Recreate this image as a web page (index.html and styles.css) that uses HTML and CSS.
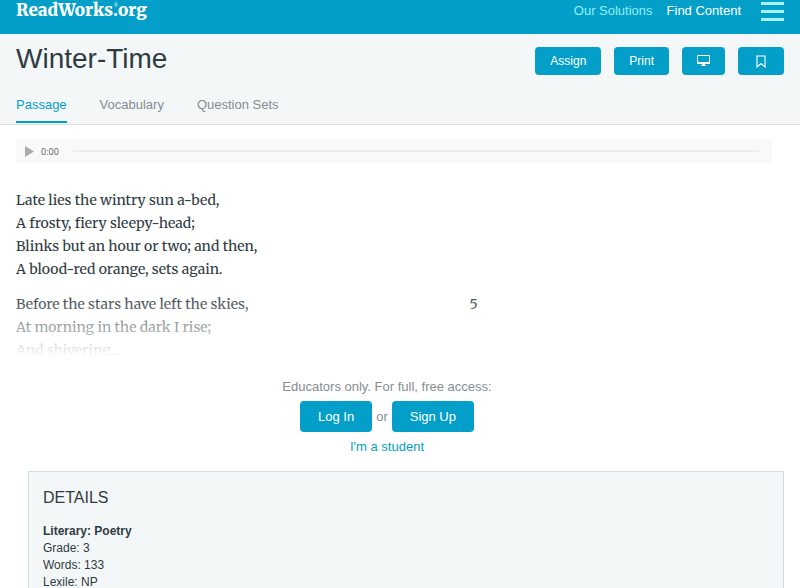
FILE: index.html
```html
<!DOCTYPE html>
<html lang="en">
  <head>
    <meta charset="UTF-8" />
    <meta name="viewport" content="width=device-width, initial-scale=1.0" />
    <title>Winter-Time</title>
    <link rel="stylesheet" href="styles.css">
  </head>
  <body>
    <header class="topbar">
      <a class="logo" href="#">ReadWorks<span class="dot">.<sup>®</sup></span>org</a>
      <nav class="topnav">
        <a class="light" href="#">Our Solutions</a>
        <a href="#">Find Content</a>
        <button class="menu" aria-label="Menu"><span></span><span></span><span></span></button>
      </nav>
    </header>

    <div class="heading">
      <div class="title-row">
        <h1>Winter-Time</h1>
        <div class="actions">
          <button class="btn">Assign</button>
          <button class="btn">Print</button>
          <button class="btn present" aria-label="Present">
            <svg width="13" height="12" viewBox="0 0 13 12">
              <path d="M.5.5h12v8h-12z" fill="none" stroke="#fff" />
              <path d="M0 7h13v2H0zM5 9h3v1h1v1H4v-1h1z" fill="#fff" />
            </svg>
          </button>
          <button class="btn save" aria-label="Bookmark">
            <svg width="10" height="13" viewBox="0 0 10 13">
              <path d="M1 1h8v11L5 8.500 1 12z" fill="none" stroke="#fff" stroke-width="1.100" />
            </svg>
          </button>
        </div>
      </div>
      <nav class="tabs">
        <a class="active" href="#">Passage</a>
        <a href="#">Vocabulary</a>
        <a href="#">Question Sets</a>
      </nav>
    </div>

    <main>
      <div class="player">
        <button class="play" aria-label="Play">
          <svg width="9" height="11" viewBox="0 0 9 11"><path d="M0 0l9 5.500L0 11z" fill="#a9abac" /></svg>
        </button>
        <span class="time">0:00</span>
        <div class="track"></div>
      </div>

      <div class="passage">
        <p>Late lies the wintry sun a-bed,<br />
          A frosty, fiery sleepy-head;<br />
          Blinks but an hour or two; and then,<br />
          A blood-red orange, sets again.</p>
        <div class="stanza">
          <p>Before the stars have left the skies,<br />
            At morning in the dark I rise;<br />
            And shivering...</p>
          <span>5</span>
        </div>
      </div>

      <div class="access">
        <p>Educators only. For full, free access:</p>
        <div class="login">
          <button class="btn big">Log In</button>
          <span>or</span>
          <button class="btn big">Sign Up</button>
        </div>
        <a href="#">I'm a student</a>
      </div>
    </main>

    <section class="details">
      <h2>DETAILS</h2>
      <strong>Literary: Poetry</strong>
      <div>Grade: 3</div>
      <div>Words: 133</div>
      <div>Lexile: NP</div>
    </section>
  </body>
</html>
```

FILE: styles.css
```css
* {
  box-sizing: border-box;
}
body {
  margin: 0;
  font-family: "Liberation Sans", Arial, sans-serif;
  font-size: 13px;
  color: #2f3b43;
  background-color: #fff;
  overflow: hidden;
}
a {
  text-decoration: none;
}
h1,
h2,
p {
  margin: 0;
  font-weight: normal;
}
button {
  font-family: inherit;
  border: none;
  cursor: pointer;
}

.topbar {
  display: flex;
  justify-content: space-between;
  height: 34px;
  padding: 0 16px;
  background-color: #049fc8;
}
.logo {
  color: #fff;
  font-family: "Merriweather", "DejaVu Serif Condensed", "DejaVu Serif", serif;
  font-weight: 900;
  font-size: 17px;
  line-height: 20px;
}
.dot {
  position: relative;
}
.logo sup {
  position: absolute;
  top: 4px;
  left: 1px;
  font-family: "Liberation Sans", Arial, sans-serif;
  font-size: 5px;
  font-weight: normal;
  line-height: 5px;
}
.topnav {
  display: flex;
  gap: 14px;
  line-height: 22px;
}
.topnav a {
  color: #fff;
}
.topnav .light {
  color: #8ff0fa;
}
.menu {
  display: flex;
  flex-direction: column;
  gap: 5px;
  width: 23px;
  margin-left: 6px;
  padding: 2px 0 0;
  background: none;
}
.menu span {
  height: 3px;
  width: 100%;
  background-color: #a5f5fb;
}

.heading {
  padding: 9px 16px 0;
  background-color: #f3f7f8;
  border-bottom: 1px solid #d9e0e1;
}
.title-row {
  display: flex;
  justify-content: space-between;
  align-items: flex-start;
}
.title-row h1 {
  font-size: 28px;
  line-height: 32px;
}
.actions {
  display: flex;
  gap: 13px;
  padding-top: 4px;
}
.btn {
  display: flex;
  align-items: center;
  justify-content: center;
  height: 28px;
  padding: 0 15px;
  border-radius: 4px;
  color: #fff;
  font-size: 12px;
  background-color: #049fc8;
}
.btn:hover {
  background-color: #0389ad;
}
.present {
  width: 43px;
}
.save {
  width: 46px;
}
.tabs {
  display: flex;
  gap: 33px;
  padding-top: 22px;
}
.tabs a {
  height: 27px;
  line-height: 16px;
  color: #858d92;
}
.tabs .active {
  height: 26px;
  color: #049fc8;
  border-bottom: 2px solid #049fc8;
}

main {
  padding: 14px 28px 0 16px;
}
.player {
  display: flex;
  align-items: center;
  height: 24px;
  padding: 0 13px 0 9px;
  background-color: #f9f9f9;
}
.play {
  display: flex;
  padding: 0;
  background: none;
}
.time {
  margin: 0 14px 0 7px;
  font-family: "Open Sans", sans-serif;
  font-size: 9px;
  color: #55595c;
}
.track {
  flex: 1;
  height: 2px;
  background-color: #ececec;
}
.passage {
  position: relative;
  height: 194px;
  padding-top: 26px;
  overflow: hidden;
  font-family: "Merriweather", "DejaVu Serif Condensed", "DejaVu Serif", serif;
  font-size: 14px;
  line-height: 23px;
}
/* fades the end of the preview out */
.passage::after {
  content: "";
  position: absolute;
  left: 0;
  right: 0;
  bottom: 0;
  height: 64px;
  background: linear-gradient(rgba(255, 255, 255, 0), #fff);
}
.stanza {
  display: grid;
  grid-template-columns: 60% 40%;
  margin-top: 12px;
}

.access {
  display: flex;
  flex-direction: column;
  align-items: center;
  padding-top: 22px;
  padding-right: 14px;
  line-height: 15px;
  color: #858d92;
}
.login {
  display: flex;
  align-items: center;
  gap: 4px;
  margin: 7px 0;
}
.big {
  height: 31px;
  padding: 0 18px;
  font-size: 13px;
}
.access a {
  color: #049fc8;
}

.details {
  margin: 17px 16px 0 28px;
  padding: 17px 14px;
  font-size: 12px;
  line-height: 17px;
  background-color: #f3f7f8;
  border: 1px solid #d3dcdd;
}
.details h2 {
  margin-bottom: 16px;
  font-size: 16px;
  line-height: 18px;
}
.details strong {
  display: block;
}
```
